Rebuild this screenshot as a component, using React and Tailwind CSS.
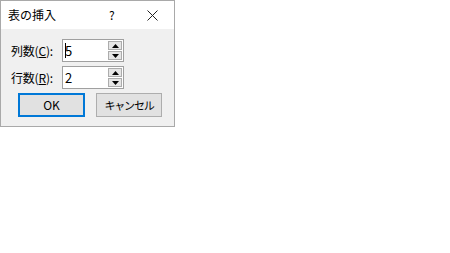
import React from 'react';

const font = { fontFamily: '"Noto Sans CJK JP", "Noto Sans", sans-serif' };

const Spin = ({ value, caret }) => (
  <div className="flex h-[23px] w-[62px] border border-[#a0a0a0] bg-white">
    <div className="flex flex-1 items-center pl-[2px] text-[13px] leading-none text-black">
      {caret && <span className="mr-[-1px] h-[15px] w-[1px] bg-black" />}
      <span>{value}</span>
    </div>
    <div className="flex w-[16px] flex-col gap-[1px] p-[1px]">
      <div className="flex flex-1 items-center justify-center border border-[#acacac] bg-[#e5e5e5]">
        <svg width="7" height="4" viewBox="0 0 7 4"><path d="M0 4L3.5 0L7 4Z" fill="#000" /></svg>
      </div>
      <div className="flex flex-1 items-center justify-center border border-[#acacac] bg-[#e5e5e5]">
        <svg width="7" height="4" viewBox="0 0 7 4"><path d="M0 0L3.5 4L7 0Z" fill="#000" /></svg>
      </div>
    </div>
  </div>
);

export default function App() {
  return (
    <div className="h-[253px] w-[450px] bg-white" style={font}>
      <div className="flex h-[127px] w-[175px] flex-col border border-[#a9a9a9]">
        {/* Title bar */}
        <div className="flex h-[28px] items-center bg-white pl-[7px] text-[12px] leading-none text-black">
          <span className="flex-1 whitespace-nowrap">表の挿入</span>
          <span className="w-[38px] text-[12px]">?</span>
          <svg className="mr-[16px]" width="11" height="11" viewBox="0 0 11 11">
            <path d="M0.5 0.5L10.5 10.5M10.5 0.5L0.5 10.5" stroke="#222" strokeWidth="1" />
          </svg>
        </div>

        {/* Body */}
        <div className="flex flex-1 flex-col bg-[#f0f0f0] pl-[10px] pt-[10px]">
          <div className="flex items-center">
            <span className="w-[51px] whitespace-nowrap text-[12px] leading-none tracking-[-0.2px] text-black">
              列数(<span className="underline">C</span>):
            </span>
            <Spin value="5" caret />
          </div>
          <div className="mt-[4px] flex items-center">
            <span className="w-[51px] whitespace-nowrap text-[12px] leading-none tracking-[-0.2px] text-black">
              行数(<span className="underline">R</span>):
            </span>
            <Spin value="2" />
          </div>
          <div className="mt-[4px] flex gap-[11px] pl-[7px]">
            <button className="h-[24px] w-[67px] border-2 border-[#0078d7] bg-[#e1e1e1] text-[12px] leading-none text-black">
              OK
            </button>
            <button className="h-[24px] w-[66px] whitespace-nowrap border border-[#adadad] bg-[#e1e1e1] text-[11px] leading-none tracking-[-1.2px] text-black">
              キャンセル
            </button>
          </div>
        </div>
      </div>
    </div>
  );
}
